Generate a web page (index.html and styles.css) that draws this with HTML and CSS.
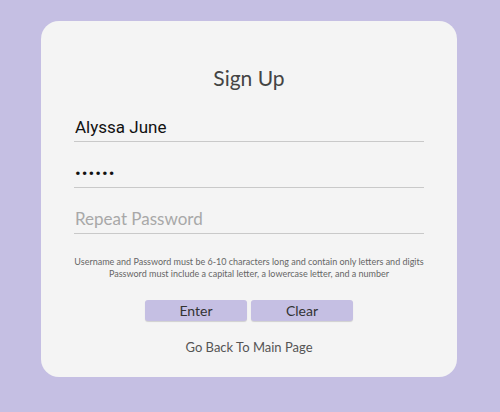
FILE: index.html
```html
<!DOCTYPE html>
<html>
<head>
<meta charset="utf-8">
<link rel="stylesheet" href="styles.css">
</head>
<body>
<div class="card">
  <h1 class="title">Sign Up</h1>
  <div class="fields">
    <input class="field" type="text" value="Alyssa June">
    <input class="field" type="password" value="abcdef">
    <input class="field" type="password" placeholder="Repeat Password">
  </div>
  <p class="notes">Username and Password must be 6-10 characters long and contain only letters and digits<br>Password must include a capital letter, a lowercase letter, and a number</p>
  <div class="buttons">
    <button class="btn">Enter</button>
    <button class="btn">Clear</button>
  </div>
  <a class="back">Go Back To Main Page</a>
</div>
</body>
</html>
```
FILE: styles.css
```css
html, body { margin: 0; padding: 0; }
body {
  background: #c5bfe3;
  width: 500px;
  height: 412px;
  padding: 21px 0 0 41px;
  box-sizing: border-box;
  font-family: Lato, "Open Sans", sans-serif;
}
.card {
  width: 416px;
  height: 356px;
  background: #f4f4f4;
  border-radius: 18px;
  box-sizing: border-box;
  padding: 44px 33px 0 33px;
  display: flex;
  flex-direction: column;
  align-items: center;
}
.title {
  margin: 0;
  font-weight: 400;
  font-size: 21px;
  line-height: 26px;
  color: #444;
}
.fields {
  width: 350px;
  margin-top: 25px;
  display: flex;
  flex-direction: column;
  gap: 20px;
}
.field {
  width: 100%;
  height: 26px;
  box-sizing: border-box;
  border: none;
  border-bottom: 1.5px solid #c9c9c9;
  background: transparent;
  padding: 0 1px 3px;
  font-family: Roboto, "Liberation Sans", sans-serif;
  font-size: 17px;
  color: #111;
  outline: none;
}
.field[type="password"] { letter-spacing: 1px; }
.field::placeholder { color: #a8a8a8; font-family: Lato, sans-serif; font-weight: 400; letter-spacing: 0; }
.notes {
  margin: 22px 0 0;
  font-size: 9px;
  line-height: 12px;
  color: #666;
  text-align: center;
  white-space: nowrap;
}
.buttons {
  margin-top: 20px;
  display: flex;
  gap: 4px;
}
.btn {
  width: 102px;
  height: 21px;
  border: none;
  border-radius: 3px;
  background: #c5bfe3;
  box-shadow: 0 1px 1px rgba(0,0,0,0.15);
  font-family: Lato, sans-serif;
  font-size: 14px;
  color: #333;
  padding: 0;
}
.back {
  margin-top: 18px;
  font-size: 13px;
  line-height: 16px;
  color: #555;
  font-weight: 400;
}
```
